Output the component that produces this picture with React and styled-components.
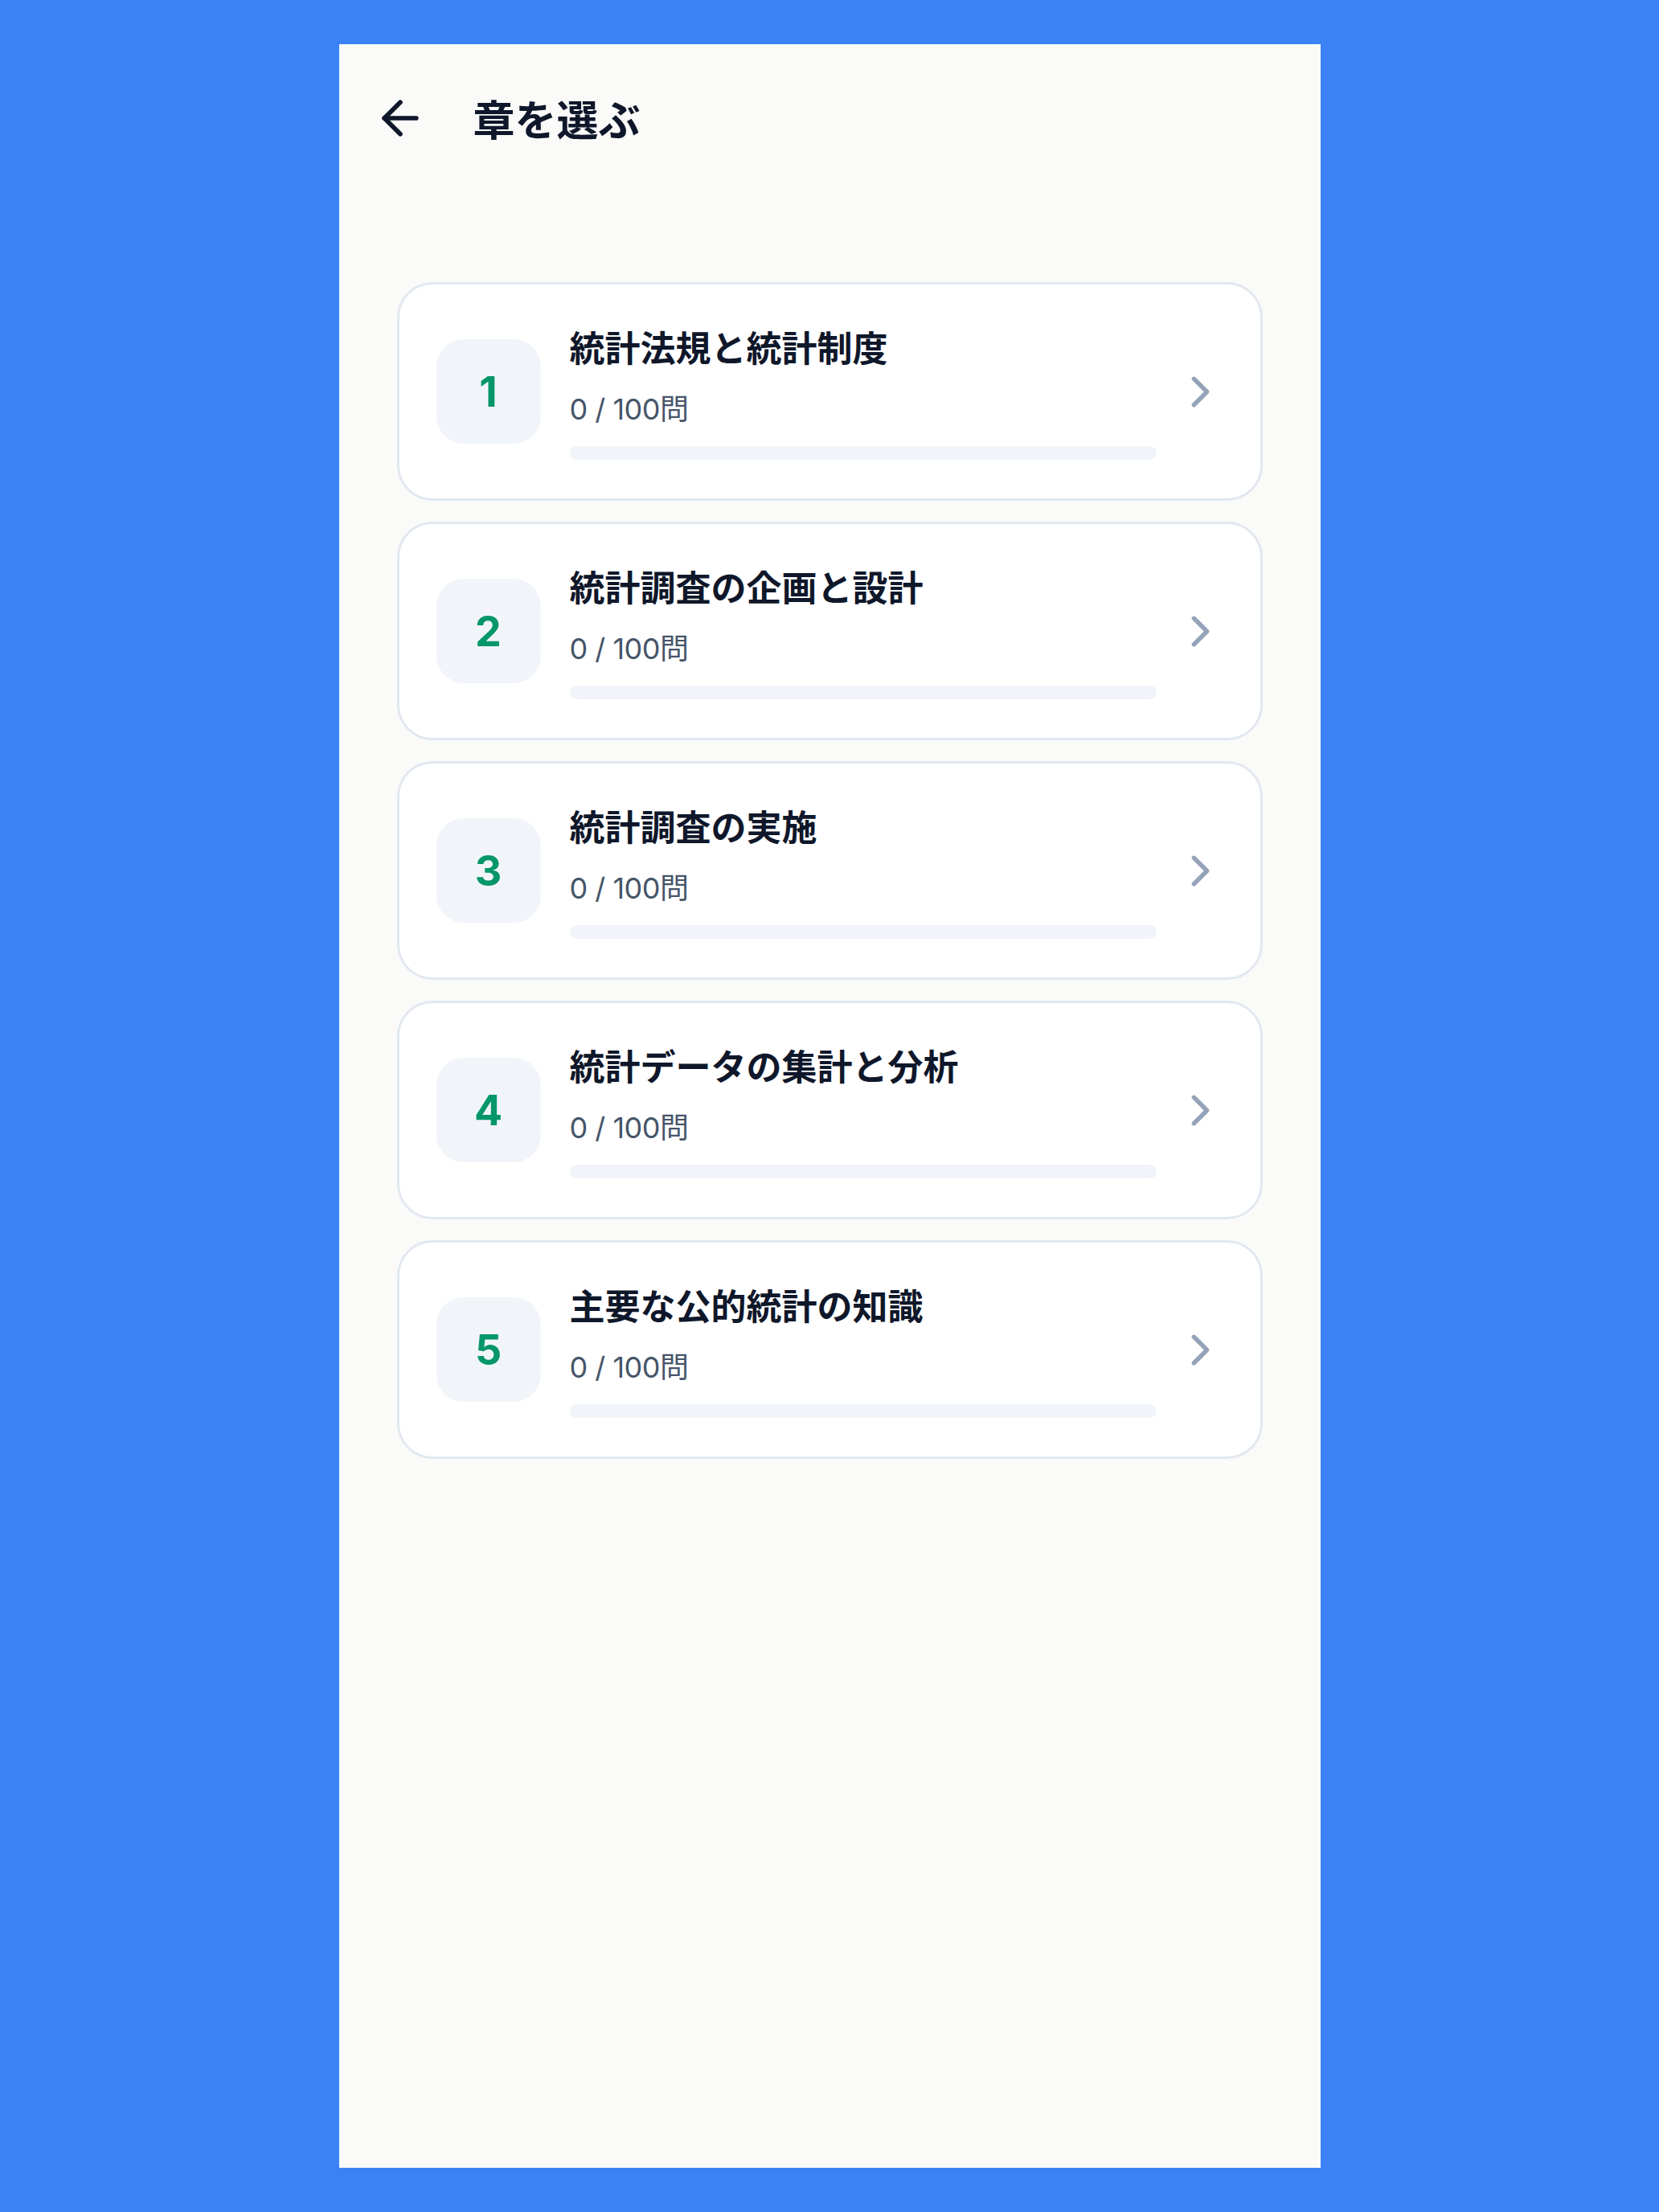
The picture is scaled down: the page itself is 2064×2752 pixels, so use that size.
import styled, { createGlobalStyle } from "styled-components";

const GlobalStyle = createGlobalStyle`
  html, body {
    margin: 0;
    padding: 0;
    background: #3b82f6;
  }
  body {
    font-family: "Inter", "Noto Sans CJK JP", sans-serif;
    color: #0f172a;
  }
`;

const Page = styled.div`
  display: flex;
  justify-content: center;
  padding: 55px 0;
`;

const Screen = styled.div`
  width: 1221px;
  height: 2642px;
  background: #fafaf9;
  box-sizing: border-box;
  padding: 0 72px;
`;

const Header = styled.header`
  display: flex;
  align-items: center;
  gap: 57px;
  height: 68px;
  margin: 58px 0 0 -30px;
`;

const BackButton = styled.button`
  display: flex;
  align-items: center;
  justify-content: center;
  width: 68px;
  height: 68px;
  padding: 0;
  border: none;
  background: transparent;
  color: #0f172a;
  cursor: pointer;
`;

const Title = styled.h1`
  margin: 0;
  font-family: "Noto Sans CJK JP", sans-serif;
  font-size: 52px;
  font-weight: 700;
  line-height: 68px;
  color: #0f172a;
`;

const List = styled.div`
  display: flex;
  flex-direction: column;
  gap: 26px;
  margin-top: 170px;
`;

const Card = styled.div`
  display: flex;
  align-items: center;
  height: 272px;
  box-sizing: border-box;
  padding: 0 42px 0 46px;
  background: #ffffff;
  border: 3px solid #e2e8f0;
  border-radius: 44px;
  cursor: pointer;
`;

const NumberBox = styled.div`
  flex: none;
  display: flex;
  align-items: center;
  justify-content: center;
  width: 130px;
  height: 130px;
  border-radius: 34px;
  background: #f1f5f9;
  color: #059669;
  font-family: "Inter", sans-serif;
  font-size: 52px;
  font-weight: 700;
`;

const Body = styled.div`
  flex: 1;
  display: flex;
  flex-direction: column;
  margin-left: 36px;
`;

const ChapterName = styled.div`
  font-family: "Noto Sans CJK JP", sans-serif;
  font-size: 44px;
  font-weight: 700;
  line-height: 58px;
  color: #0f172a;
`;

const Count = styled.div`
  margin-top: 24px;
  font-size: 36px;
  line-height: 50px;
  letter-spacing: -0.5px;
  color: #475569;
`;

const Track = styled.div`
  margin-top: 21px;
  height: 17px;
  border-radius: 9px;
  background: #f1f5f9;
  overflow: hidden;
`;

const Fill = styled.div`
  height: 100%;
  background: #059669;
  border-radius: 9px;
`;

const Chevron = styled.div`
  flex: none;
  display: flex;
  margin-left: 22px;
  color: #94a3b8;
`;

const chapters = [
  "統計法規と統計制度",
  "統計調査の企画と設計",
  "統計調査の実施",
  "統計データの集計と分析",
  "主要な公的統計の知識",
];

function ArrowLeft() {
  return (
    <svg width="68" height="68" viewBox="0 0 24 24" fill="none" stroke="currentColor" strokeWidth="2" strokeLinecap="round" strokeLinejoin="round">
      <path d="m12 19-7-7 7-7" />
      <path d="M19 12H5" />
    </svg>
  );
}

function ChevronRight() {
  return (
    <svg width="65" height="65" viewBox="0 0 24 24" fill="none" stroke="currentColor" strokeWidth="2" strokeLinecap="round" strokeLinejoin="round">
      <path d="m9 18 6-6-6-6" />
    </svg>
  );
}

export default function App() {
  return (
    <>
      <GlobalStyle />
      <Page>
        <Screen>
          <Header>
            <BackButton aria-label="戻る">
              <ArrowLeft />
            </BackButton>
            <Title>章を選ぶ</Title>
          </Header>
          <List>
            {chapters.map((name, i) => {
              const done = 0;
              const total = 100;
              return (
                <Card key={name}>
                  <NumberBox>{i + 1}</NumberBox>
                  <Body>
                    <ChapterName>{name}</ChapterName>
                    <Count>
                      {done} / {total}問
                    </Count>
                    <Track>
                      <Fill style={{ width: `${(done / total) * 100}%` }} />
                    </Track>
                  </Body>
                  <Chevron>
                    <ChevronRight />
                  </Chevron>
                </Card>
              );
            })}
          </List>
        </Screen>
      </Page>
    </>
  );
}
